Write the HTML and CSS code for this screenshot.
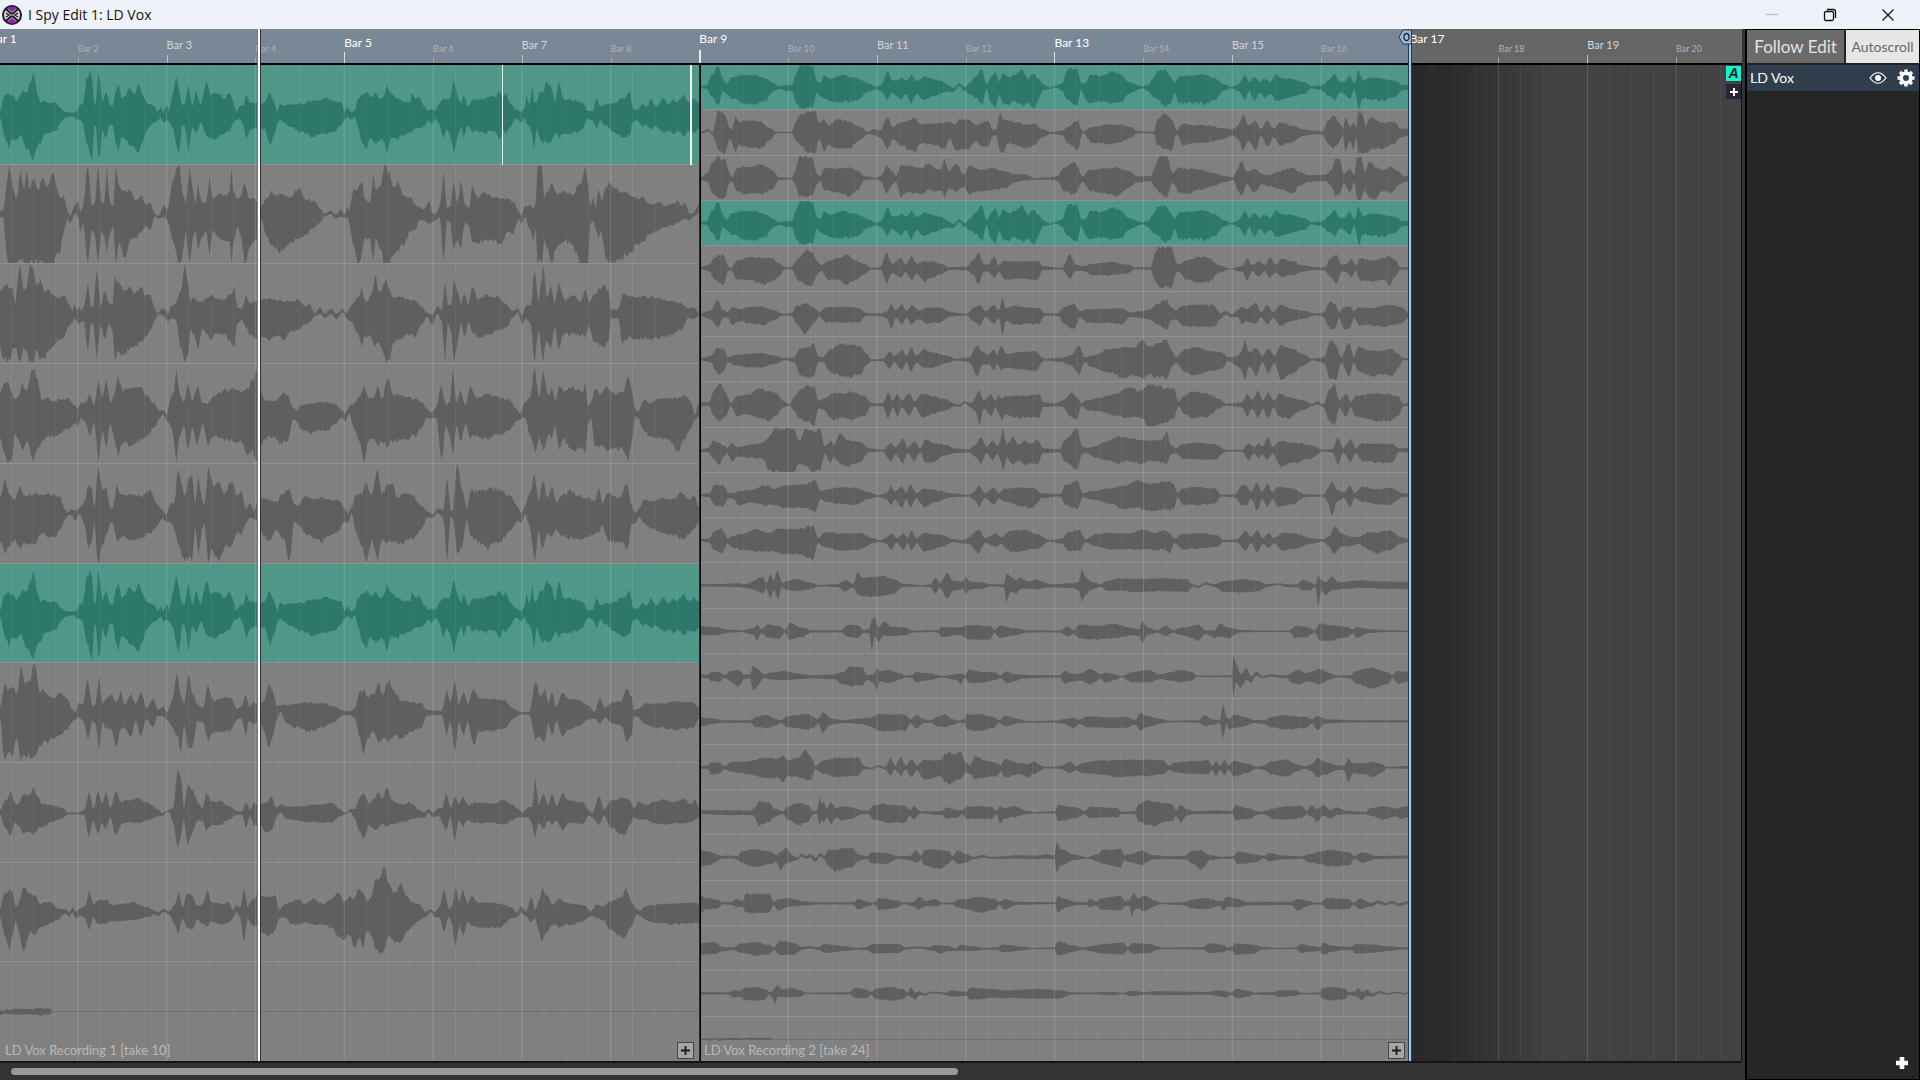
FILE: index.html
```html
<!DOCTYPE html>
<html lang="en">
<head>
<meta charset="utf-8">
<title>I Spy Edit 1: LD Vox</title>
<link rel="stylesheet" href="styles.css">
</head>
<body>
<div class="app">
  <header class="titlebar">
    <svg class="logo" viewBox="0 0 20 20" aria-hidden="true">
      <circle cx="10" cy="10" r="9" fill="#d9d9e0" stroke="#1b1a26" stroke-width="2"/>
      <path d="M5 3Q10 0 15 3L10 7Z" fill="#8e24aa"/>
      <path d="M5 17Q10 20 15 17L10 13Z" fill="#8e24aa"/>
      <path d="M4 4L9 8.500H11L16 4M4 16L9 11.500H11L16 16" fill="none" stroke="#1b1a26" stroke-width="2.200"/>
      <path d="M4 8L7 10L4 12M16 8L13 10L16 12" fill="none" stroke="#1b1a26" stroke-width="1.400"/>
    </svg>
    <h1 class="title">I Spy Edit 1: LD Vox</h1>
    <div class="window-controls">
      <button class="window-button window-button-off" aria-label="Minimize"><svg viewBox="0 0 14 14"><path d="M1 6.500H13"/></svg></button>
      <button class="window-button" aria-label="Restore"><svg viewBox="0 0 14 14"><rect x="1.500" y="3.500" width="9" height="9" rx="1.500"/><path d="M4 1.500H10.500Q12.500 1.500 12.500 3.500V10"/></svg></button>
      <button class="window-button" aria-label="Close"><svg viewBox="0 0 14 14"><path d="M1.500 1.500L12.500 12.500M12.500 1.500L1.500 12.500"/></svg></button>
    </div>
  </header>

  <main class="workspace">
    <section class="editor" aria-label="Timeline">
      <ol class="ruler" id="ruler"></ol>
      <div class="tracks">
        <article class="clip">
          <div class="lanes" id="clip-1"></div>
          <span class="clip-name">LD Vox Recording 1 [take 10]</span>
          <button class="clip-add" aria-label="Add take"><svg viewBox="0 0 12 12"><path d="M6 1V11M1 6H11"/></svg></button>
          <i class="cut cut-a"></i>
          <i class="cut cut-b"></i>
        </article>
        <article class="clip clip-second">
          <div class="lanes" id="clip-2"></div>
          <span class="clip-name">LD Vox Recording 2 [take 24]</span>
          <button class="clip-add" aria-label="Add take"><svg viewBox="0 0 12 12"><path d="M6 1V11M1 6H11"/></svg></button>
        </article>
        <div class="empty">
          <button class="tag tag-a" aria-label="Automatic">A</button>
          <button class="tag tag-plus" aria-label="Add"><svg viewBox="0 0 12 12"><path d="M6 2V10M2 6H10"/></svg></button>
        </div>
        <svg class="grid-lines" id="grid" viewBox="0 0 1742 10" preserveAspectRatio="none" aria-hidden="true"></svg>
      </div>
      <i class="playhead"></i>
      <i class="loop-end"></i>
      <svg class="loop-flag" viewBox="0 0 14 16" aria-hidden="true"><path d="M13.500 1H5L1 8L5 15H13.500Z" fill="#9db9d8" stroke="#1f3a5c"/><ellipse cx="8.500" cy="8" rx="2.500" ry="3.500" fill="none" stroke="#16283c" stroke-width="1.300"/></svg>
      <div class="scrollbar"><div class="thumb"></div></div>
    </section>

    <aside class="panel">
      <div class="panel-buttons">
        <button class="mode mode-follow">Follow Edit</button>
        <button class="mode mode-auto">Autoscroll</button>
      </div>
      <div class="track-row">
        <span class="track-name">LD Vox</span>
        <button class="icon-button" aria-label="Show track"><svg viewBox="0 0 18 18"><path d="M1 9Q9 -1.500 17 9Q9 19.500 1 9Z" fill="none" stroke="#fff" stroke-width="1.200"/><circle cx="9" cy="9" r="3" fill="#fff"/></svg></button>
        <button class="icon-button" aria-label="Track settings"><svg viewBox="0 0 18 18"><circle cx="9" cy="9" r="4.800" fill="none" stroke="#fff" stroke-width="3.600"/><path d="M9 .5V4M9 14V17.500M.5 9H4M14 9H17.500M3 3L5.500 5.500M12.500 12.500L15 15M15 3L12.500 5.500M5.500 12.500L3 15" stroke="#fff" stroke-width="3.400"/></svg></button>
      </div>
      <button class="panel-add" aria-label="Add track"><svg viewBox="0 0 14 14"><path d="M7 1V13M1 7H13" stroke="#fff" stroke-width="4.600"/></svg></button>
    </aside>
  </main>
</div>
<script src="script.js"></script>
</body>
</html>
```
FILE: styles.css
```css
* { box-sizing: border-box; }

body {
  margin: 0;
  background: #333;
  font-family: Lato, "Liberation Sans", sans-serif;
}

button {
  margin: 0;
  padding: 0;
  border: 0;
  background: none;
  font-family: inherit;
}

.app {
  display: flex;
  flex-direction: column;
  height: 100vh;
}

/* window title bar */
.titlebar {
  display: flex;
  align-items: center;
  height: 29px;
  padding: 0 25px 0 2px;
  background: #eff3f9;
}
.logo { width: 20px; height: 20px; }
.title {
  flex: 1;
  margin: 0 0 0 6px;
  font: 400 14px/20px "Open Sans", "Noto Sans", sans-serif;
  color: #111;
}
.window-controls { display: flex; gap: 44px; }
.window-button { width: 14px; height: 14px; }
.window-button svg {
  display: block;
  fill: none;
  stroke: #111;
  stroke-width: 1.3;
}
.window-button-off svg { stroke: #b9bdc3; }

.workspace {
  display: flex;
  flex: 1;
  min-height: 0;
}

/* timeline */
.editor {
  position: relative;
  display: flex;
  flex: 1;
  flex-direction: column;
  min-width: 0;
  padding-right: 3px;
  background: #333;
}
.ruler {
  display: grid;
  grid-template-columns: 778fr repeat(18, 888fr) 660fr;
  height: 36px;
  margin: 0;
  padding: 0;
  list-style: none;
  overflow: hidden;
  background: linear-gradient(90deg, #7a8796 81%, #666 81%);
  border-bottom: 2px solid #000;
}
.bar {
  display: flex;
  flex-direction: column;
  min-width: 0;
  white-space: nowrap;
}
.bar-label { flex: 1; }
.bar-tick { width: 1px; }
.bar-first { margin-left: -11px; }
.bar-major .bar-label { padding-top: 2px; font-size: 12px; line-height: 16px; color: #fff; }
.bar-major .bar-tick { width: 2px; height: 16px; background: #e8eaec; }
.bar-four .bar-label { padding-top: 6px; font-size: 12px; line-height: 16px; color: #fff; }
.bar-four .bar-tick { height: 14px; background: #dcdfe3; }
.bar-two .bar-label { padding-top: 8px; font-size: 11px; line-height: 16px; color: #d2d6da; }
.bar-two .bar-tick { height: 11px; background: #c0c5ca; }
.bar-one .bar-label { padding-top: 12px; font-size: 9px; line-height: 16px; color: #adb1b6; }
.bar-one .bar-tick { height: 9px; background: #a0a5aa; }

.tracks {
  position: relative;
  display: grid;
  grid-template-columns: 699fr 711fr 332fr;
  flex: 1;
  min-height: 0;
  border-bottom: 2px solid #151515;
}
.clip {
  position: relative;
  display: flex;
  min-width: 0;
  min-height: 0;
  background: #808080;
}
.clip-second { border-left: 2px solid #000; }
.lanes {
  display: flex;
  flex: 1;
  flex-direction: column;
  min-width: 0;
}
.lane {
  flex: 1;
  min-height: 0;
  border-bottom: 1px solid #919191;
  color: #5f5f5f;
}
.lane:last-child { border-bottom: 0; }
.lane-active {
  background: #50978a;
  color: #2e776b;
}
.wave {
  display: block;
  width: 100%;
  height: 100%;
  fill: currentColor;
}
.clip-name {
  position: absolute;
  left: 5px;
  bottom: 2px;
  font-size: 13px;
  line-height: 18px;
  color: #b9b9b9;
}
.clip-second .clip-name { left: 3px; }
.clip-add {
  position: absolute;
  right: 5px;
  bottom: 2px;
  width: 17px;
  height: 17px;
  padding: 2px;
  border: 1px solid #444;
  background: #a5a5a5;
  z-index: 2;
}
.clip-add svg, .tag svg, .icon-button svg, .panel-add svg { display: block; }
.clip-add svg { width: 100%; stroke: #1c1c1c; stroke-width: 2; }
.cut {
  position: absolute;
  top: 0;
  height: 10%;
  background: #f0f5f4;
}
.cut-a { left: 71.8%; width: 1px; }
.cut-b { left: 98.7%; width: 2px; }

.empty {
  display: flex;
  flex-direction: column;
  align-items: flex-end;
  gap: 3px;
  padding: 1px 0 0;
  border-right: 1px solid #111;
  background: linear-gradient(90deg, #282828 0, #2b2b2b 12%, #424242 42%);
}
.tag {
  display: grid;
  place-items: center;
  width: 15px;
  height: 15px;
  z-index: 2;
}
.tag-a {
  background: #13f5cf;
  color: #06261f;
  font: italic 700 14px/15px "Liberation Sans", sans-serif;
}
.tag-plus { background: #26263a; }
.tag svg { width: 12px; stroke: #fff; stroke-width: 2; }

.grid-lines {
  position: absolute;
  inset: 0;
  width: 100%;
  height: 100%;
  pointer-events: none;
}
.grid-bar { stroke: rgba(255, 255, 255, .17); stroke-width: 1; }
.grid-beat { stroke: rgba(255, 255, 255, .06); stroke-width: 1; }

.playhead {
  position: absolute;
  left: 14.7%;
  top: 0;
  bottom: 19px;
  width: 4px;
  border: solid #333;
  border-width: 0 1px;
  border-left-color: #777;
  background: #fff;
}
.loop-end {
  position: absolute;
  left: 80.7%;
  top: 0;
  bottom: 19px;
  width: 4px;
  border: solid #1f3a5c;
  border-width: 0 1px;
  background: #a9c6e6;
}
.loop-flag {
  position: absolute;
  left: 80.1%;
  top: 0;
  width: 14px;
  height: 16px;
}

.scrollbar {
  height: 17px;
  padding: 5px 0 0 11px;
  background: #333;
}
.thumb {
  width: 54.7%;
  height: 7px;
  border-radius: 4px;
  background: #999;
}

/* track panel */
.panel {
  display: flex;
  flex-direction: column;
  width: 175px;
  border: 1px solid #000;
  border-width: 1px 1px 1px 2px;
  background: #262626;
}
.panel-buttons {
  display: flex;
  gap: 2px;
  height: 35px;
  padding-bottom: 2px;
  background: #222;
}
.mode { font-size: 17px; line-height: 20px; }
.mode-follow { flex: 4; background: #6b6b6b; color: #e4e4e4; }
.mode-auto { flex: 3; background: #e6e6e6; color: #666; font-size: 14px; }
.track-row {
  display: flex;
  align-items: center;
  gap: 10px;
  height: 26px;
  padding: 0 4px 0 3px;
  background: #2f3d4c;
}
.track-name { flex: 1; font-size: 14px; line-height: 20px; color: #fff; }
.icon-button { width: 18px; height: 18px; }
.panel-add {
  align-self: flex-end;
  width: 14px;
  height: 14px;
  margin: auto 10px 9px 0;
}
```
FILE: script.js
```js
// Each take is a list of "x up down" peaks; heights are measured from the centre line.
const VOX_1 = "0 5 5,10 48 55,20 53 88,28 50 60,36 32 65,44 46 55,50 60 62,58 55 90,66 80 95,74 110 120,82 55 85,90 28 75,98 34 50,106 30 48,125 30 42,135 15 20,145 5 8,165 3 4,172 8 14,178 25 12,185 25 20,193 95 75,200 112 98,205 95 122,210 22 30,214 30 30,219 108 110,223 85 105,228 28 35,236 58 62,244 25 25,252 22 28,258 60 75,264 78 98,270 42 60,278 48 62,290 68 80,300 50 85,308 78 98,318 50 72,328 28 40,345 20 20,352 5 15,358 18 8,364 5 20,372 25 14,376 6 18,386 55 35,393 97 80,399 65 98,406 22 25,412 25 30,420 78 100,428 20 30,437 60 50,447 22 20,460 85 55,468 52 62,485 52 60,500 40 50,512 55 45,520 35 22,526 5 14,535 20 10,543 22 30,549 52 65,557 28 40,565 30 35,580 28 38,590 30 35,602 55 82,612 28 50,618 5 22,624 28 12,632 20 20,645 25 32,670 27 45,700 35 58,730 42 50,750 33 40,762 30 25,768 4 14,774 18 5,782 4 13,792 10 5,797 40 30,808 48 75,818 60 88,825 42 60,838 55 78,848 38 65,857 50 70,863 78 98,870 55 65,885 40 62,900 32 55,915 32 45,917 55 50,925 40 35,935 45 35,945 20 30,955 8 15,962 12 25,970 8 10,980 28 25,988 40 62,995 40 35,1003 40 50,1012 85 104,1020 45 55,1028 25 30,1033 48 60,1043 20 30,1055 38 45,1080 40 48,1100 45 42,1115 55 65,1122 42 40,1127 55 50,1135 30 35,1150 12 10,1162 5 20,1170 18 8,1174 50 25,1180 20 30,1187 75 55,1190 30 90,1196 30 35,1203 58 60,1208 55 72,1219 86 72,1228 70 70,1238 30 45,1245 82 60,1255 40 50,1285 35 48,1300 28 35,1310 8 10,1322 8 15,1330 42 38,1338 20 15,1350 25 28,1370 30 45,1390 42 60,1404 60 55,1410 15 18,1420 10 15,1432 28 32,1440 18 25,1452 38 38,1462 20 30,1478 40 45,1490 25 42,1500 38 50,1510 30 40,1524 52 55,1535 30 45,1547 42 48,1558 30 35";

const CLIP_1 = [
  VOX_1,
  "0 8 5,8 10 8,14 70 95,20 128 128,28 70 128,36 38 120,46 110 118,54 60 128,60 115 128,66 62 126,74 90 128,84 65 128,97 95 120,104 70 126,120 105 128,128 60 95,134 42 100,142 50 45,150 8 8,156 -5 22,168 25 -5,175 32 10,179 5 48,185 20 20,196 128 128,204 20 40,212 30 55,219 128 128,226 30 40,232 25 55,238 122 100,245 30 50,253 20 30,258 122 128,264 75 75,278 60 112,290 62 65,302 35 60,316 50 45,324 25 30,335 28 38,345 0 4,352 -5 10,367 22 5,373 10 15,386 90 70,393 120 100,400 128 128,406 60 110,414 25 40,422 122 128,430 60 60,436 25 40,441 80 88,450 30 60,460 30 40,467 95 105,474 40 40,486 52 60,502 50 68,512 60 70,516 120 128,520 60 75,530 40 30,538 50 60,545 80 128,557 40 85,565 42 70,575 35 65,582 22 10,594 40 55,605 62 80,612 50 85,625 52 98,645 42 75,668 70 62,680 38 52,700 35 35,716 12 18,722 0 5,738 8 -2,748 -2 10,760 12 5,768 -2 10,774 18 5,779 8 25,787 60 80,800 72 128,807 85 100,812 40 60,825 30 60,832 105 120,838 60 60,848 70 90,857 128 128,868 110 128,876 70 105,886 85 92,898 48 80,915 45 45,925 25 40,934 18 15,945 12 15,957 35 25,962 6 20,970 -3 15,980 20 5,989 110 120,996 15 15,1004 20 20,1011 85 92,1020 25 65,1027 88 90,1036 25 20,1046 15 30,1052 75 70,1062 45 75,1078 55 68,1100 45 70,1118 38 75,1130 42 45,1145 32 48,1156 8 10,1162 -6 26,1170 20 5,1182 25 40,1188 12 70,1194 30 35,1198 125 128,1208 122 128,1213 40 65,1218 60 85,1230 78 128,1240 55 90,1256 58 70,1275 50 75,1292 80 128,1305 125 128,1311 80 128,1315 20 25,1322 42 15,1328 15 40,1334 65 62,1340 35 40,1350 72 120,1356 80 128,1370 68 128,1390 58 110,1405 50 98,1420 40 75,1432 45 70,1450 25 50,1470 32 40,1482 22 32,1500 28 28,1512 35 20,1518 20 15,1526 28 10,1538 0 15,1545 2 5,1558 28 -5",
  "0 60 82,8 68 122,16 75 128,24 65 120,28 65 90,34 20 88,40 90 115,45 128 125,52 60 85,58 60 98,67 128 128,74 118 128,80 70 95,90 88 118,98 55 115,110 60 90,120 45 85,132 38 70,144 48 60,155 20 30,162 5 22,166 25 10,172 5 20,176 15 28,181 5 20,188 20 20,196 80 100,202 15 25,208 15 25,216 115 120,224 15 28,233 55 65,244 25 25,251 20 45,256 100 120,262 82 95,275 60 105,290 68 90,300 50 85,315 68 70,325 45 58,335 48 45,346 8 15,352 -2 2,360 12 2,372 5 15,374 -5 22,382 20 12,392 25 15,402 55 90,412 128 128,420 70 100,424 30 45,433 40 55,442 32 90,450 30 40,470 45 68,485 38 52,500 35 55,515 48 75,522 70 88,528 15 28,540 10 15,548 48 35,556 25 55,575 35 62,600 40 70,620 35 58,632 30 68,645 30 50,662 35 42,680 18 28,692 22 22,700 -2 8,714 15 0,724 -2 12,738 12 0,750 -3 14,764 12 -4,772 -2 12,783 20 20,798 40 50,806 65 85,815 30 60,828 48 60,836 98 85,845 55 75,861 88 128,869 60 120,876 40 75,890 45 65,915 35 55,926 32 60,940 15 28,952 0 8,964 -5 30,975 18 -2,985 8 20,992 80 128,998 20 20,1006 22 50,1012 92 128,1022 50 60,1027 20 22,1034 50 60,1045 20 18,1052 68 50,1066 38 60,1085 48 58,1110 42 45,1130 22 35,1142 5 10,1155 12 -4,1163 -8 28,1173 20 12,1183 20 28,1192 110 128,1200 25 40,1211 128 128,1218 40 70,1228 72 90,1236 22 30,1245 80 90,1258 35 55,1280 45 55,1295 30 55,1305 60 60,1313 25 30,1324 50 75,1345 72 88,1356 60 72,1362 10 12,1378 10 12,1388 50 80,1400 45 62,1425 42 70,1455 42 65,1490 32 60,1520 25 40,1535 12 10,1545 15 15,1558 0 5",
  "0 50 60,8 75 100,16 80 128,26 55 128,32 35 50,42 42 68,50 80 95,60 60 68,74 112 128,84 90 90,92 35 75,104 38 60,120 30 62,135 35 50,150 38 40,168 20 25,174 8 35,180 28 12,190 28 20,200 50 58,210 20 20,220 85 128,228 40 40,237 85 88,246 25 25,255 50 68,263 98 108,272 62 80,290 65 85,315 68 68,328 45 58,345 25 35,355 5 12,364 8 2,372 -5 20,380 40 30,388 55 70,393 115 128,400 50 60,410 30 30,420 75 95,428 30 35,440 68 80,452 25 25,464 25 85,475 45 60,500 60 70,520 65 75,540 55 75,553 65 108,562 85 90,571 115 122,590 32 65,610 30 60,628 50 82,642 48 70,652 15 15,662 5 20,670 22 40,690 25 52,710 28 42,730 30 42,748 22 25,762 8 10,770 -3 22,778 18 -2,790 25 42,800 42 70,812 70 128,820 40 70,832 38 65,841 70 80,852 38 75,864 90 88,875 50 72,900 42 65,925 38 60,940 28 38,950 12 10,962 0 12,972 15 10,984 70 120,994 22 30,1003 28 60,1010 118 105,1017 25 30,1026 60 72,1038 20 25,1048 70 65,1060 40 58,1085 50 68,1110 42 55,1135 35 45,1150 12 20,1160 -3 15,1170 30 10,1182 40 55,1192 118 100,1202 40 60,1211 110 98,1222 45 52,1230 68 65,1238 30 30,1246 70 95,1256 55 65,1268 68 88,1285 60 95,1300 55 90,1304 80 105,1310 15 30,1318 30 10,1325 60 85,1340 50 80,1352 70 98,1370 50 88,1388 55 95,1400 95 125,1410 50 60,1415 12 5,1422 2 12,1435 35 45,1450 25 58,1470 38 65,1490 38 70,1512 40 95,1525 48 65,1540 30 40,1548 -5 15,1558 25 5",
  "0 38 75,12 85 105,20 50 85,32 35 68,44 68 90,55 45 75,75 50 78,95 48 50,110 50 60,125 45 60,135 42 40,142 15 20,150 0 6,158 10 2,168 5 18,178 15 0,188 30 30,197 75 90,204 70 75,210 10 20,219 118 128,228 60 80,238 65 55,245 15 25,252 12 25,260 75 70,270 48 62,295 50 70,320 45 60,335 60 50,348 25 35,362 8 12,370 -6 20,380 25 22,388 25 38,397 115 80,412 45 125,421 95 112,428 100 125,435 20 30,442 100 110,450 35 40,456 20 25,464 120 128,474 75 95,488 80 128,500 48 90,518 85 80,526 45 50,538 55 55,548 10 25,558 25 10,566 5 15,576 40 20,588 38 62,600 35 72,615 30 42,630 48 65,645 62 120,656 22 20,665 20 30,680 45 50,700 35 65,715 42 75,735 35 58,755 35 45,768 12 20,775 -2 25,784 15 -2,794 48 50,806 50 85,818 78 125,828 45 65,842 115 128,850 48 70,862 72 75,875 75 72,885 40 75,900 50 78,920 45 68,940 18 40,952 5 10,965 -4 10,975 12 -2,988 8 10,997 90 122,1004 8 5,1010 5 15,1018 128 98,1030 60 90,1040 10 15,1050 60 60,1065 58 78,1090 65 88,1115 60 72,1135 45 45,1155 15 20,1162 -3 25,1170 18 0,1180 50 30,1192 100 128,1200 30 42,1210 85 90,1220 38 50,1230 68 60,1240 28 40,1252 45 60,1270 60 65,1290 45 65,1310 40 60,1325 30 55,1336 65 48,1342 25 30,1355 50 70,1380 40 72,1398 75 90,1408 20 25,1415 0 25,1425 12 8,1435 35 25,1450 30 38,1475 38 50,1500 38 58,1520 52 65,1535 35 55,1547 45 42,1558 15 20",
  VOX_1,
  "0 10 12,10 70 120,20 60 100,28 65 115,38 45 65,46 120 126,54 80 110,66 80 115,75 126 115,80 115 110,88 50 85,96 60 78,106 45 80,120 38 68,135 50 55,150 35 45,160 8 25,168 -2 18,175 25 12,185 20 20,196 85 70,206 15 20,213 20 28,221 95 100,228 20 25,237 35 42,247 45 40,260 25 90,269 55 40,278 20 40,292 48 62,302 20 20,314 52 60,326 10 15,341 35 38,352 5 8,364 15 10,372 -3 20,384 30 35,394 100 60,404 40 100,410 20 30,420 100 95,430 45 85,440 20 20,452 10 25,464 70 75,475 28 52,500 38 50,515 35 45,528 8 18,538 15 15,547 45 58,556 12 20,564 25 30,578 20 22,590 30 50,598 70 90,608 55 60,616 15 20,625 18 -3,638 18 28,660 22 38,690 25 50,720 22 40,745 15 25,762 5 8,780 2 6,792 10 15,800 50 60,811 60 108,820 40 65,832 45 50,843 75 80,852 45 70,867 88 75,880 50 60,895 30 65,915 25 50,940 22 40,950 5 8,970 4 6,985 2 6,996 58 62,1003 25 20,1014 82 100,1022 20 25,1034 52 60,1042 20 20,1055 60 82,1070 35 50,1100 35 50,1125 32 42,1145 8 15,1160 0 4,1180 0 5,1194 78 72,1204 40 62,1214 62 75,1222 20 22,1230 52 60,1240 12 20,1252 50 60,1270 35 45,1290 32 35,1310 18 18,1325 0 15,1338 38 30,1348 10 12,1365 25 30,1385 28 35,1398 60 75,1408 40 60,1412 5 8,1422 8 12,1440 22 32,1470 22 40,1510 28 45,1545 26 38,1558 10 15",
  "0 5 5,12 30 40,24 52 58,34 22 25,42 22 35,52 45 55,66 45 50,74 65 60,84 40 42,95 20 38,115 18 25,140 10 15,150 -1 4,170 -2 4,188 4 6,198 52 62,208 8 20,219 55 55,228 20 25,236 52 42,246 10 10,258 52 58,270 28 30,290 30 25,310 35 28,330 24 20,350 8 10,362 -4 8,376 6 -4,386 10 25,396 110 90,404 85 55,410 8 15,418 70 85,430 58 50,440 25 20,452 8 20,460 50 48,472 28 32,492 28 32,510 15 18,530 2 5,540 2 5,548 25 40,558 5 8,566 25 35,580 20 30,594 25 50,605 42 45,615 10 15,625 20 -2,638 15 16,670 15 22,710 20 25,740 24 25,758 8 10,770 -3 5,780 8 -3,792 8 15,800 35 48,812 48 65,822 20 30,834 35 45,843 50 40,852 35 28,863 62 35,875 30 30,895 20 25,915 25 18,935 5 12,945 -2 15,955 8 0,965 -2 12,978 10 8,986 10 25,994 50 48,1004 10 10,1014 40 75,1022 20 18,1032 42 38,1042 18 20,1060 25 28,1100 22 25,1122 32 32,1140 20 20,1156 8 12,1165 -2 12,1178 12 12,1186 12 30,1193 88 65,1200 20 25,1212 48 42,1222 18 20,1230 48 30,1240 15 20,1254 50 48,1268 30 28,1300 25 30,1312 5 8,1320 -4 12,1336 40 32,1346 5 8,1362 30 40,1390 38 60,1405 30 32,1412 8 12,1425 28 18,1440 18 18,1460 28 28,1480 32 30,1500 25 28,1524 35 28,1540 20 25,1550 32 18,1558 12 10",
  "0 8 8,10 50 60,22 60 100,28 55 60,35 12 20,42 25 50,52 65 100,68 50 50,78 42 55,90 20 38,100 25 35,115 25 25,130 8 18,145 8 2,155 0 12,162 12 -2,168 0 15,180 10 8,190 15 15,199 55 45,208 18 12,218 30 28,236 32 28,250 18 22,270 22 22,295 25 20,330 12 12,345 3 4,352 -1 10,365 8 -2,378 2 6,390 20 30,398 55 55,406 12 15,418 48 40,430 40 42,440 15 15,450 18 30,462 55 35,472 25 22,495 20 32,510 25 25,520 5 15,526 18 -3,535 10 10,544 60 75,552 12 15,560 30 32,575 45 35,585 40 52,600 38 62,614 45 45,622 5 15,635 20 12,650 25 30,665 35 32,680 22 25,700 35 30,720 20 30,740 35 38,756 50 65,766 25 70,780 42 60,790 35 90,800 60 65,808 50 90,818 30 50,828 38 60,836 85 95,845 85 110,855 118 100,866 75 60,880 52 80,894 75 75,905 40 50,920 25 35,935 20 20,948 0 12,960 8 -2,970 0 12,980 15 12,990 58 50,1000 8 10,1008 15 30,1015 65 90,1024 25 30,1032 60 60,1042 20 22,1052 42 35,1064 25 38,1090 25 40,1115 22 38,1140 12 15,1152 -2 12,1162 15 0,1172 0 10,1184 38 25,1193 5 15,1202 30 50,1208 60 75,1220 45 50,1232 18 30,1248 35 38,1260 25 30,1275 22 32,1300 18 22,1318 2 8,1330 20 15,1345 15 20,1360 28 45,1388 40 65,1395 65 60,1408 25 35,1418 8 4,1425 3 8,1440 15 20,1465 20 28,1500 22 30,1540 24 28,1558 22 28",
  "0 4 8,6 -2 7,14 5 4,22 2 7,30 6 7,40 6 7,50 6 8,58 5 6,66 6 6,74 4 8,84 8 8,92 7 11,100 6 6,108 8 8,114 4 4,116 -.8 0,1558 -.8 0"
];

const VOX_2 = "0 3 3,14 5 5,22 38 28,38 62 52,50 20 10,55 8 20,70 30 35,90 36 48,118 38 52,140 28 42,160 12 12,172 2 4,190 6 12,200 5 10,210 42 50,218 66 65,246 64 64,254 20 15,262 12 25,272 35 35,285 25 45,310 38 45,340 28 40,370 10 12,385 0 5,398 8 12,410 48 40,420 20 15,430 18 25,440 28 38,452 18 20,463 38 50,474 18 20,490 32 38,510 25 28,530 18 18,545 5 12,555 -4 14,568 12 -4,580 -2 10,590 10 20,605 32 32,618 55 55,628 8 4,638 30 48,648 45 64,656 15 20,664 42 48,678 30 55,688 38 40,708 52 55,718 25 50,732 40 66,742 25 40,752 8 8,770 -2 4,780 4 0,795 10 10,805 50 35,815 58 45,828 56 58,836 10 5,846 12 35,856 38 50,880 35 45,905 48 50,925 38 45,940 15 20,970 2 3,984 5 10,994 25 28,1005 52 35,1020 56 60,1034 30 50,1042 10 15,1052 32 50,1080 34 48,1110 38 52,1130 28 38,1150 8 10,1168 0 3,1185 10 12,1196 38 40,1206 15 10,1218 32 42,1230 15 15,1240 25 32,1252 15 20,1266 38 42,1280 25 35,1300 25 30,1325 15 20,1345 2 3,1365 4 8,1380 20 25,1395 40 40,1406 15 15,1415 15 20,1428 35 35,1438 8 5,1447 52 66,1456 20 35,1475 28 38,1500 25 40,1525 20 30,1545 5 8,1560 8 8";

const CLIP_2 = [
  VOX_2,
  "0 0 4,16 8 -4,26 -2 8,32 30 30,36 66 50,48 60 64,54 48 64,62 15 20,68 5 30,76 48 62,84 30 35,92 35 45,110 35 48,130 32 50,155 10 20,165 0 2,200 0 2,208 30 25,220 55 40,235 66 65,250 66 65,260 25 20,270 40 58,280 20 38,300 40 50,325 32 48,350 15 22,368 0 4,380 8 8,395 5 15,410 45 52,422 15 20,440 30 40,470 42 62,482 25 35,510 25 38,535 28 50,548 30 20,560 22 55,568 40 55,590 38 50,605 20 25,616 28 42,632 35 42,642 5 10,650 8 8,658 60 60,664 38 64,676 35 35,695 30 40,715 22 50,735 25 38,750 8 15,770 0 4,795 4 8,808 15 35,828 35 55,840 0 0,860 15 32,890 22 35,920 22 32,945 15 18,960 2 2,996 0 4,1005 40 40,1020 60 52,1036 38 55,1046 5 5,1060 25 40,1090 20 32,1120 20 30,1145 12 22,1170 8 10,1182 20 20,1193 55 58,1204 20 25,1220 35 55,1232 8 10,1246 35 42,1260 10 15,1275 30 40,1300 20 32,1325 8 10,1350 4 6,1368 2 8,1380 35 35,1392 50 50,1404 30 30,1412 8 5,1418 45 62,1428 15 25,1436 30 55,1442 10 10,1446 66 66,1454 60 65,1462 20 64,1475 45 50,1500 28 50,1525 32 35,1540 10 15,1560 10 10",
  "0 2 4,15 15 10,25 48 45,40 66 60,52 60 60,62 18 15,68 0 10,80 30 40,100 34 48,135 40 50,155 25 35,172 2 5,200 0 3,208 20 20,216 66 58,245 62 55,255 12 18,262 5 5,272 30 38,300 28 42,325 32 55,345 22 35,360 5 4,385 0 3,398 8 12,408 40 48,420 20 20,430 5 10,438 38 55,460 38 42,485 30 50,500 45 35,515 28 40,528 25 35,535 60 60,545 20 30,562 45 40,578 10 25,590 38 48,615 25 40,640 30 35,670 20 30,690 12 12,715 10 6,735 -1 4,770 2 4,785 6 8,798 32 40,822 50 50,840 5 10,855 25 38,885 30 45,915 32 55,940 22 30,960 5 12,990 5 8,1000 38 30,1010 66 45,1025 66 58,1038 15 12,1052 32 45,1075 28 45,1100 25 35,1130 15 22,1150 5 12,1172 2 5,1180 25 38,1190 50 52,1200 18 18,1218 28 42,1235 12 18,1250 8 25,1270 20 32,1300 30 45,1320 18 22,1335 8 10,1375 10 8,1388 25 25,1396 60 58,1404 58 50,1414 12 15,1428 30 42,1438 8 10,1443 66 60,1452 66 66,1460 20 35,1470 50 60,1486 32 62,1500 25 40,1520 35 45,1535 20 20,1545 5 12,1560 8 8",
  VOX_2,
  "0 2 3,18 10 8,30 35 35,50 40 50,58 8 10,66 -2 4,78 22 35,105 32 35,140 30 52,155 30 40,170 15 25,185 2 2,200 4 4,215 30 40,232 58 52,245 50 52,256 20 18,265 8 8,280 22 35,300 30 35,320 40 50,340 22 35,360 12 18,375 0 3,395 2 4,408 48 45,420 12 15,440 30 28,450 8 10,463 36 35,475 12 15,490 20 40,505 20 28,530 12 18,545 2 4,585 4 6,600 25 20,610 48 48,622 10 10,632 10 10,645 36 30,655 8 10,668 22 35,700 20 32,740 22 35,752 5 5,795 0 3,812 42 32,824 10 8,840 5 8,860 12 20,900 18 22,940 10 15,955 2 2,990 2 4,1000 50 40,1008 66 56,1035 66 60,1046 15 12,1052 10 10,1065 22 35,1095 35 42,1115 32 42,1140 8 12,1165 -2 2,1190 5 10,1202 30 38,1212 8 8,1228 20 25,1240 8 8,1252 32 30,1264 10 12,1278 28 28,1300 20 20,1325 8 10,1350 2 4,1372 2 6,1388 32 30,1398 42 48,1408 10 10,1418 10 10,1432 28 28,1440 5 5,1450 30 38,1480 22 40,1500 30 35,1515 36 52,1528 25 25,1538 2 4,1560 2 4",
  "0 2 3,20 10 15,38 42 40,48 12 10,58 5 8,70 22 32,85 15 22,110 22 28,135 22 34,160 12 18,180 0 3,200 2 4,210 25 30,230 32 60,250 18 25,260 5 5,275 20 25,320 22 25,345 18 25,365 2 4,398 2 6,410 8 12,418 30 45,428 10 10,442 32 30,452 8 10,464 28 30,478 10 15,500 20 28,525 20 25,550 5 6,585 0 3,600 20 22,614 28 35,625 8 8,645 28 28,655 10 10,664 48 62,670 15 20,685 25 30,715 20 30,745 18 30,755 2 4,785 2 4,800 22 30,822 30 46,834 8 8,850 15 25,880 15 25,925 18 30,945 4 8,965 8 10,985 12 15,1005 30 30,1024 46 48,1034 20 18,1045 10 15,1060 25 35,1100 30 38,1128 28 38,1142 2 15,1155 8 0,1168 -1 10,1182 12 8,1190 22 30,1200 15 20,1220 35 30,1232 5 8,1246 28 30,1258 5 10,1276 28 35,1300 15 20,1330 8 12,1350 1 2,1368 3 6,1385 38 45,1395 32 45,1404 5 8,1414 20 45,1428 25 40,1436 8 10,1448 20 35,1480 18 35,1510 28 38,1540 22 28,1560 0 8",
  "0 2 3,20 8 8,38 35 48,50 32 35,58 5 8,75 12 18,100 15 25,130 18 25,160 10 15,185 2 2,205 5 8,218 35 50,235 35 55,248 48 52,258 8 8,268 5 8,285 30 40,308 45 50,330 42 55,350 40 45,365 15 15,375 -2 5,400 0 5,415 22 30,425 8 8,442 28 32,452 8 8,462 36 38,474 10 10,490 30 25,510 20 25,545 8 10,560 0 3,590 4 8,608 42 50,620 20 15,632 12 15,645 28 32,652 10 12,660 42 35,672 15 25,700 22 30,735 25 35,755 0 3,795 4 8,815 12 20,832 42 48,844 5 8,860 10 25,900 30 40,930 35 55,955 35 50,972 60 60,985 38 45,1000 45 55,1025 60 60,1035 25 25,1045 5 10,1065 30 40,1085 35 48,1120 25 35,1145 20 30,1160 5 4,1180 8 20,1190 25 35,1196 60 64,1206 20 20,1222 35 50,1235 8 8,1248 32 42,1262 8 10,1275 42 64,1300 32 45,1325 15 20,1345 0 3,1370 4 10,1385 55 60,1398 38 62,1408 5 10,1426 50 52,1436 5 8,1446 38 38,1475 25 52,1500 25 48,1520 32 52,1535 15 25,1545 2 2,1560 2 2",
  "0 4 4,18 5 5,28 40 35,42 62 54,55 35 35,65 2 5,80 25 38,100 28 30,130 48 42,150 38 50,165 35 35,180 10 10,195 -1 3,205 20 20,215 40 42,232 55 52,250 52 62,258 8 12,268 15 15,290 32 48,310 32 42,330 38 48,360 25 35,375 2 5,400 2 5,412 35 45,422 8 8,432 32 38,442 10 8,458 34 36,470 8 5,486 32 40,510 24 30,535 15 20,560 0 5,568 -3 8,580 8 -3,595 2 10,604 20 20,612 44 66,622 10 12,638 30 35,648 8 8,655 28 30,662 15 50,670 25 30,700 25 42,745 30 40,752 5 8,780 2 6,795 10 8,815 35 38,828 20 45,836 2 4,850 12 18,880 20 22,910 30 35,940 50 42,965 40 40,985 58 66,1000 58 65,1025 50 58,1040 48 45,1050 8 5,1065 25 32,1080 38 42,1115 32 38,1140 15 12,1155 0 4,1190 4 8,1202 30 38,1212 12 12,1226 42 42,1236 8 12,1248 35 42,1260 8 10,1272 32 38,1290 20 42,1325 12 18,1345 0 5,1355 8 0,1370 -2 8,1382 45 50,1394 66 66,1404 10 10,1420 32 38,1430 5 8,1440 25 38,1480 32 50,1515 30 52,1535 22 35,1545 0 5,1560 6 4",
  "0 2 4,15 5 5,28 30 28,40 22 44,52 12 15,58 5 8,68 22 35,80 8 18,105 15 22,135 20 25,150 40 60,162 66 66,205 66 64,216 28 40,230 66 50,245 60 64,262 66 64,272 10 10,285 28 40,292 15 20,307 52 42,320 30 50,350 25 35,370 5 5,400 0 3,418 20 35,428 8 10,445 35 40,454 6 8,470 25 32,482 5 6,494 32 40,510 22 35,540 15 15,560 4 8,590 2 6,604 15 20,616 38 42,628 10 8,642 28 32,652 10 10,658 25 25,664 66 64,672 15 20,686 42 45,698 15 30,712 30 45,725 18 38,740 30 45,752 5 8,790 2 6,800 30 35,828 66 60,838 10 10,850 5 8,865 10 22,890 25 30,920 42 42,940 38 32,965 30 42,990 28 32,1015 32 38,1024 58 42,1034 15 12,1045 5 8,1060 18 25,1090 22 28,1130 18 28,1155 0 4,1190 0 3,1205 20 30,1215 8 10,1228 20 22,1236 10 12,1246 40 30,1258 8 8,1274 28 48,1310 22 38,1340 15 25,1370 0 3,1390 2 6,1402 38 45,1412 5 8,1430 34 35,1440 5 8,1455 20 32,1490 20 38,1520 18 38,1535 5 5,1560 6 6",
  "0 2 3,18 5 5,30 30 30,48 32 35,60 5 8,70 5 10,85 12 32,110 15 22,145 30 32,160 18 28,185 30 38,225 32 38,252 45 48,262 10 10,275 15 20,300 22 25,340 22 28,370 8 10,390 -1 5,408 5 10,418 28 32,426 10 10,442 25 40,452 5 8,460 34 38,474 5 8,490 20 35,515 15 20,550 5 6,590 0 3,600 8 12,612 28 35,624 5 8,645 22 30,655 5 8,670 20 20,700 22 32,730 22 40,750 5 8,790 2 3,803 32 30,828 44 44,840 5 5,860 12 12,900 20 25,930 28 42,960 45 38,985 35 48,1030 42 45,1040 35 42,1048 5 5,1060 20 30,1090 25 30,1130 20 25,1145 0 3,1175 2 6,1190 30 30,1200 28 32,1210 8 10,1224 38 46,1234 8 10,1246 34 35,1258 8 10,1268 25 35,1300 20 28,1330 2 5,1370 0 3,1380 20 20,1388 42 62,1400 15 18,1415 8 8,1428 28 38,1438 5 8,1455 25 20,1490 18 28,1515 22 28,1545 5 5,1560 2 4",
  "0 2 3,18 4 6,28 25 28,46 36 42,58 5 8,68 12 22,90 18 30,120 32 34,150 22 35,175 35 40,205 32 42,246 44 58,258 5 8,272 24 22,310 20 32,350 20 28,380 5 8,395 -1 4,405 5 8,420 20 28,430 5 6,445 20 30,454 5 8,463 28 32,474 4 8,490 22 34,530 15 20,555 2 4,575 -2 10,590 8 10,603 25 30,612 32 40,624 5 8,650 20 20,660 8 10,680 28 35,712 32 32,740 18 25,765 0 4,795 4 10,808 25 32,834 30 32,845 2 6,870 18 18,900 22 28,940 20 28,970 32 28,1000 22 30,1018 30 28,1030 22 40,1042 5 8,1060 18 28,1100 20 25,1135 15 20,1150 0 4,1180 2 6,1198 28 32,1210 8 8,1224 30 38,1236 5 10,1250 22 22,1260 5 8,1280 22 32,1310 20 25,1340 5 10,1370 2 3,1382 10 20,1394 42 42,1408 20 18,1430 10 18,1445 8 10,1465 22 25,1488 22 42,1515 30 30,1540 8 10,1560 2 4",
  "0 3 3,50 3 4,80 5 5,100 2 8,115 12 12,135 25 25,145 5 10,153 35 42,160 12 12,169 44 42,178 5 5,190 12 15,210 18 18,240 8 12,260 0 3,300 2 5,318 15 18,335 2 5,345 40 28,355 22 32,375 25 36,400 28 32,425 18 25,445 3 4,490 -1 4,505 2 5,516 22 25,525 5 5,541 38 40,556 12 15,578 10 10,582 28 28,592 10 12,615 8 12,640 2 2,667 2 6,672 35 54,682 25 20,692 15 25,705 22 10,720 10 10,735 16 12,770 2 6,820 5 8,832 10 15,838 50 52,846 25 28,860 8 12,880 2 4,890 12 15,920 20 16,960 18 20,1010 20 18,1070 18 20,1080 2 5,1095 -3 8,1110 8 -3,1130 2 5,1150 12 20,1190 18 22,1225 12 18,1245 2 4,1270 5 -1,1290 2 5,1310 1 5,1325 16 15,1340 8 15,1352 0 5,1358 30 66,1365 15 15,1375 8 30,1388 25 15,1405 8 12,1450 14 8,1500 10 10,1560 10 12",
  "0 15 12,30 12 12,65 3 3,90 2 2,115 8 10,124 20 30,132 5 5,148 22 20,172 15 22,185 2 3,195 24 26,220 10 18,245 2 3,310 2 3,320 18 15,345 18 20,358 2 4,370 5 5,376 35 62,382 45 15,390 10 32,402 28 12,420 12 15,450 10 12,465 1 3,520 2 2,530 12 18,570 10 10,590 18 25,637 15 26,645 2 4,658 16 20,690 8 12,720 2 3,790 1 3,805 14 15,820 2 8,832 20 22,870 15 25,910 22 20,950 8 12,965 5 15,972 34 38,980 12 12,1005 2 4,1022 16 15,1038 2 4,1060 10 12,1095 20 28,1110 2 8,1132 2 20,1140 22 15,1160 10 20,1185 3 3,1230 1 2,1295 1 2,1308 15 22,1330 14 18,1350 2 3,1363 24 30,1380 18 28,1420 12 18,1435 4 5,1442 12 20,1470 5 5,1510 2 2,1560 1 2",
  "0 4 5,15 3 5,22 12 15,40 12 18,52 2 4,65 15 15,80 18 32,98 4 8,108 5 5,114 30 42,125 20 30,138 4 5,155 10 10,180 15 12,220 6 8,240 2 6,290 4 8,315 12 25,328 30 30,355 26 28,365 2 10,380 5 20,387 25 46,392 15 16,415 18 20,440 8 10,448 1 2,465 2 5,472 12 18,500 8 12,530 0 3,560 5 10,572 8 25,580 2 3,590 20 20,620 12 20,645 12 12,660 2 5,672 14 22,690 5 15,710 3 6,750 2 4,790 2 4,800 16 22,820 5 15,835 8 12,855 22 25,880 5 8,890 10 20,912 4 10,925 0 2,950 12 18,985 18 18,1010 5 8,1030 10 12,1055 18 18,1080 12 14,1090 1 2,1160 1 2,1168 2 5,1171 62 66,1176 45 20,1188 5 35,1200 25 10,1210 -2 20,1222 14 -2,1236 -2 6,1250 5 1,1290 1 5,1300 10 20,1315 20 25,1332 8 15,1345 15 18,1360 22 25,1385 8 8,1400 1 3,1430 2 6,1440 15 22,1475 25 38,1510 12 25,1522 2 5,1532 15 22,1560 12 15",
  "0 12 15,25 8 8,50 2 4,110 2 4,120 12 18,145 18 20,165 5 12,175 2 4,190 14 18,235 22 25,250 10 18,257 5 5,268 26 35,285 8 10,310 2 4,355 8 8,370 10 15,395 20 30,450 20 28,460 4 5,475 18 22,490 5 5,505 2 4,520 12 15,535 20 18,555 5 10,565 1 4,580 5 5,585 22 25,615 20 28,645 12 20,655 2 4,670 16 15,700 5 5,720 -1 3,780 1 4,800 5 8,820 10 22,832 4 8,850 14 18,900 10 20,935 12 20,955 2 10,968 25 28,980 15 18,1015 5 6,1030 0 2,1095 2 4,1110 18 15,1125 5 10,1142 2 5,1148 52 56,1156 12 5,1162 5 25,1172 20 20,1195 12 15,1215 3 5,1240 2 8,1255 12 18,1285 18 25,1330 12 20,1345 5 5,1355 16 28,1375 5 6,1390 4 5,1430 2 3,1560 2 3",
  "0 3 4,15 5 5,22 15 22,42 12 18,52 2 5,65 14 12,100 16 20,140 28 32,170 25 32,180 36 46,190 20 28,215 28 30,230 54 38,243 32 38,250 2 5,270 20 20,300 28 30,345 28 25,360 2 5,375 -3 6,388 5 -1,405 0 5,418 28 25,426 2 5,440 32 28,450 3 5,463 24 30,475 4 8,490 22 38,528 20 28,536 40 45,545 46 52,560 38 40,572 46 35,582 12 15,592 5 20,603 34 38,625 20 30,650 12 28,660 4 10,668 24 32,700 12 20,720 8 30,732 18 20,748 5 10,755 0 2,790 2 4,812 16 18,825 2 8,840 12 18,880 20 22,920 22 30,980 22 26,1018 20 22,1030 4 8,1045 14 15,1080 18 20,1118 20 20,1125 2 6,1133 18 28,1142 3 8,1152 22 25,1160 3 5,1172 18 28,1200 10 18,1225 0 4,1240 5 8,1255 18 22,1290 22 28,1310 8 12,1330 2 4,1345 8 12,1355 28 30,1375 15 22,1400 5 8,1416 3 8,1424 28 48,1432 12 20,1460 12 20,1480 15 30,1500 8 15,1508 0 3,1560 3 4",
  "0 5 5,50 5 8,110 4 8,118 12 15,128 32 42,150 30 30,160 10 15,180 2 4,190 16 22,215 28 38,235 20 30,248 2 5,256 5 5,261 48 42,265 25 20,270 32 32,276 10 15,286 32 35,298 10 15,310 18 25,330 14 20,355 5 5,368 3 5,380 20 22,405 24 30,448 18 30,460 5 10,468 18 22,482 2 3,530 2 8,540 14 20,565 5 15,575 5 5,585 16 20,615 18 20,640 15 20,650 3 4,657 18 34,668 12 18,690 18 15,715 3 5,740 -1 3,780 2 3,785 20 28,825 14 18,845 2 5,855 16 18,885 14 15,915 12 16,925 0 5,955 2 5,963 25 28,985 36 38,995 30 44,1020 28 30,1038 22 25,1045 3 10,1055 22 32,1068 8 10,1085 2 5,1130 4 5,1170 3 4,1175 20 24,1205 10 20,1230 0 5,1245 4 8,1255 10 20,1290 18 22,1322 18 18,1332 2 5,1345 20 15,1355 8 28,1370 22 10,1385 5 20,1398 14 8,1420 3 5,1460 -1 6,1475 12 10,1500 18 22,1530 10 12,1540 14 20,1560 20 15",
  "0 22 28,20 15 22,45 3 5,65 4 2,80 2 6,90 18 18,120 24 30,155 16 20,165 5 12,175 15 40,186 28 20,202 5 12,212 -3 8,222 10 -3,232 2 4,240 10 0,252 -3 14,262 12 -4,272 2 6,280 22 28,295 22 42,332 28 30,348 6 10,365 2 3,375 14 18,405 12 20,435 2 4,460 3 8,472 20 16,485 4 8,492 22 25,525 22 36,545 18 20,553 2 5,565 20 20,585 8 15,600 0 5,620 6 1,640 0 4,700 5 4,740 4 5,760 8 4,778 4 6,783 48 50,790 25 25,820 8 8,850 -1 3,872 8 12,885 22 20,925 25 30,930 5 8,945 8 15,970 20 22,995 5 6,1030 2 5,1065 3 6,1080 18 18,1100 20 38,1120 5 8,1145 0 4,1172 2 4,1180 16 20,1220 8 15,1240 3 3,1250 12 12,1280 4 6,1325 2 4,1335 8 15,1370 18 22,1380 22 28,1425 14 25,1438 2 5,1455 15 16,1485 3 5,1560 4 3",
  "0 22 30,10 15 18,35 10 16,50 2 2,68 3 5,78 12 12,92 5 10,98 28 28,120 28 30,150 28 28,160 2 4,170 12 22,195 14 10,230 4 6,255 2 3,335 2 3,345 12 18,370 2 8,380 0 2,392 15 20,430 8 14,445 1 2,465 2 8,480 18 18,495 5 8,515 12 10,530 0 3,555 2 3,565 10 14,615 18 28,648 12 20,655 2 4,668 12 18,695 3 4,780 2 2,784 22 28,800 12 14,825 3 5,848 2 4,856 12 12,870 3 6,880 15 20,925 22 22,932 5 8,943 8 8,948 20 40,953 32 20,960 14 15,975 22 25,1000 8 8,1010 0 2,1060 2 5,1080 10 15,1110 15 18,1140 5 8,1150 8 22,1158 20 10,1180 12 12,1200 3 6,1270 3 5,1300 3 5,1312 12 22,1340 5 6,1350 0 2,1368 4 5,1375 15 18,1425 12 18,1435 0 4,1450 14 18,1475 0 10,1490 8 0,1505 0 6,1520 6 0,1535 -1 8,1560 6 0",
  "0 14 18,28 18 18,50 2 8,70 2 5,90 14 14,120 18 22,150 10 18,160 2 5,175 22 20,200 16 20,225 3 4,240 5 0,260 2 5,270 12 14,315 5 8,345 0 4,365 2 5,378 12 16,435 12 14,450 2 3,480 4 0,500 2 5,515 8 8,525 8 16,545 6 8,560 -2 8,572 10 8,600 5 8,620 0 4,650 2 4,665 10 12,715 3 5,725 0 2,778 1 2,785 20 22,820 8 10,840 1 4,855 5 8,885 12 16,930 16 18,938 2 5,950 15 16,985 12 14,1005 5 5,1015 1 2,1105 2 3,1118 15 15,1148 10 12,1158 2 5,1170 5 8,1175 14 20,1215 10 16,1235 3 3,1270 0 2,1310 1 2,1318 12 14,1345 5 10,1362 2 8,1368 16 20,1390 6 10,1410 5 5,1432 3 5,1440 12 16,1480 10 14,1510 5 8,1545 2 3,1560 1 2",
  "0 2 4,60 2 3,72 8 12,88 6 10,94 15 20,120 18 22,142 12 18,150 2 3,158 5 15,163 16 34,169 24 10,180 10 10,195 16 12,220 8 10,228 1 2,328 2 3,338 16 14,365 10 14,375 2 3,385 14 18,415 18 22,445 12 18,455 0 5,461 18 10,472 0 20,480 6 5,492 -2 6,510 4 -1,540 1 4,550 8 10,575 4 8,585 3 8,592 15 20,640 12 14,665 8 14,740 12 16,790 8 16,815 2 3,850 1 2,905 3 5,930 0 2,945 6 8,980 2 3,995 5 5,1120 3 4,1135 8 8,1155 5 12,1165 0 4,1178 12 15,1205 6 10,1215 1 3,1262 2 5,1270 8 12,1310 8 8,1320 0 2,1360 1 3,1366 14 16,1385 18 22,1417 14 18,1425 2 4,1440 5 8,1446 16 10,1454 2 22,1465 10 8,1478 -2 10,1492 6 0,1510 -1 4,1530 4 -1,1545 -1 3,1560 3 0",
  "0 -1 3,10 3 0,20 0 4,30 2 -1,40 1 4,55 2 1,70 3 2,90 2 1,110 4 1,130 2 2,150 4 1,160 -.8 0,1560 -.8 0"
];

const NS = "http://www.w3.org/2000/svg";

// Repeatable roughness, so that edges are ragged in the same way on every load.
const rough = n => {
  const v = Math.sin(n * 12.9898) * 43758.5453;
  return v - Math.floor(v);
};

function wavePath(take, half, seed) {
  const peaks = take.split(",").map(p => p.split(" ").map(Number));
  const top = [];
  const bottom = [];
  const put = (x, up, down) => {
    top.push(x.toFixed(1) + " " + (half - Math.min(up + 1, half)).toFixed(1));
    bottom.push(x.toFixed(1) + " " + (half + Math.min(down + 1, half)).toFixed(1));
  };
  peaks.forEach(([x, up, down], i) => {
    put(x, up, down);
    const next = peaks[i + 1];
    if (!next || next[0] - x > 200) return;
    const steps = Math.floor((next[0] - x) / 3);
    for (let s = 1; s < steps; s++) {
      const t = s / steps;
      const ease = t * t * (3 - 2 * t);
      const u = up + (next[1] - up) * ease;
      const d = down + (next[2] - down) * ease;
      const n = seed * 97 + x + s * 7;
      put(x + (next[0] - x) * t, u * (0.88 + rough(n) * 0.2), d * (0.88 + rough(n + 3) * 0.2));
    }
  });
  return "M" + top.join("L") + "L" + bottom.reverse().join("L") + "Z";
}

function drawClip(id, takes, width, half, active) {
  const host = document.getElementById(id);
  takes.forEach((take, i) => {
    const lane = document.createElement("div");
    lane.className = active.includes(i) ? "lane lane-active" : "lane";
    const svg = document.createElementNS(NS, "svg");
    svg.setAttribute("class", "wave");
    svg.setAttribute("viewBox", `0 0 ${width} ${half * 2}`);
    svg.setAttribute("preserveAspectRatio", "none");
    const path = document.createElementNS(NS, "path");
    path.setAttribute("d", wavePath(take, half, active.includes(i) ? 1 : i + 2));
    svg.append(path);
    lane.append(svg);
    host.append(lane);
  });
}

function drawRuler() {
  const ruler = document.getElementById("ruler");
  for (let n = 1; n <= 20; n++) {
    const k = n - 1;
    const kind = k % 8 === 0 ? "major" : k % 4 === 0 ? "four" : k % 2 === 0 ? "two" : "one";
    const item = document.createElement("li");
    item.className = `bar bar-${kind}` + (n === 1 ? " bar-first" : "");
    item.innerHTML = `<span class="bar-label">Bar ${n}</span><i class="bar-tick"></i>`;
    ruler.append(item);
  }
}

function drawGrid() {
  const grid = document.getElementById("grid");
  for (let beat = 1; beat < 79; beat++) {
    const x = -11 + beat * 22.2;
    const line = document.createElementNS(NS, "path");
    line.setAttribute("class", beat % 4 ? "grid-beat" : "grid-bar");
    line.setAttribute("d", `M${x.toFixed(1)} 0V10`);
    grid.append(line);
  }
}

drawRuler();
drawClip("clip-1", CLIP_1, 1558, 128, [0, 5]);
drawClip("clip-2", CLIP_2, 1560, 68, [0, 3]);
drawGrid();
```
